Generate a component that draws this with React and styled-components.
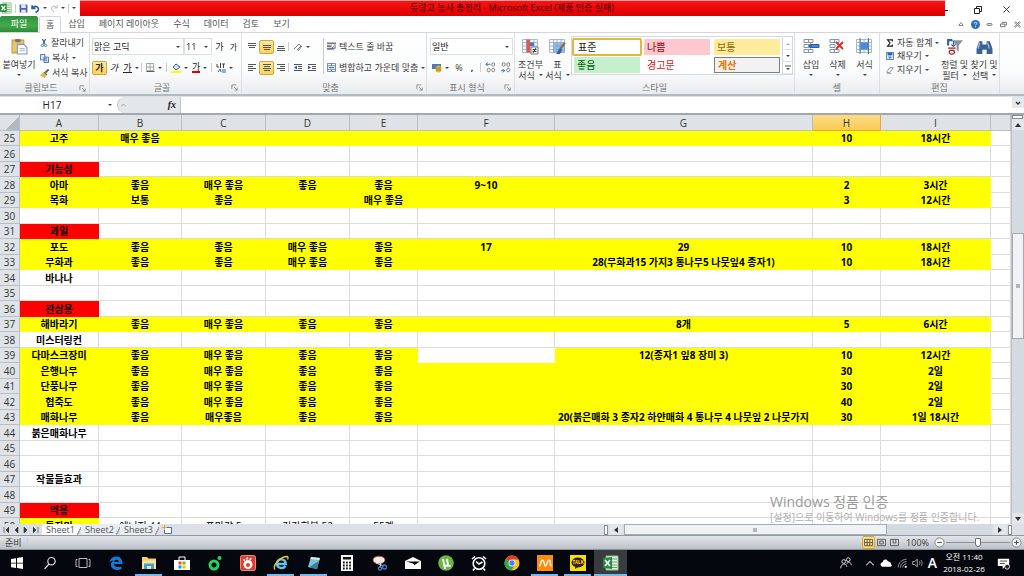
import React from "react";
import styled, {createGlobalStyle, css} from "styled-components";

const GlobalStyle = createGlobalStyle`
    * { box-sizing: border-box; }
    body {
        margin: 0;
        background: #fff;
        color: #3b3b3b;
        font: 9px/12px "Open Sans", "Noto Sans CJK KR", sans-serif;
    }
    button, input, select {
        font: inherit;
        color: inherit;
        margin: 0;
        padding: 0;
        border: 0;
        background: none;
        border-radius: 0;
        white-space: nowrap;
    }
`;

const Window = styled.div`
    display: flex;
    flex-direction: column;
    height: 100vh;
    overflow: hidden;
`;

const Svg = styled.svg`
    display: block;
    flex: none;
`;

const Icon = ({w = 16, h, box = 16, children}) => (
    <Svg width={w} height={h || w} viewBox={`0 0 ${box} ${box}`} fill="none" aria-hidden="true">
        {children}
    </Svg>
);

const Caret = styled.span`
    flex: none;
    border: 2px solid transparent;
    border-top-color: #444;
    border-bottom: 0;
`;

/* ---------- title bar ---------- */

const TitleBar = styled.header`
    display: flex;
    height: 16px;
    flex: none;
`;

const QuickBar = styled.div`
    display: flex;
    align-items: center;
    gap: 3px;
    width: 80px;
    padding: 0;
`;

const Title = styled.div`
    flex: 1;
    padding-right: 1px;
    text-align: center;
    line-height: 14px;
    color: #4d0000;
    border-top: 1px solid #ff9c9c;
    background: linear-gradient(#f91414, #d90000);
`;

const WindowButtons = styled.div`
    display: flex;
    justify-content: space-between;
    align-items: center;
    width: 79px;
    padding: 3px 14px 0 0;
`;

const IconButton = styled.button`
    display: flex;
    align-items: center;
    justify-content: center;
    flex: none;
    gap: 3px;
    height: 14px;
    ${props => props.$w && css`width: ${props.$w}px;`}
    ${props => props.$on && css`
        border: 1px solid #d6a43b;
        border-radius: 2px;
        background: linear-gradient(#fde79a, #fbd35a);
    `}
`;

const Divider = styled.span`
    flex: none;
    width: 1px;
    height: ${props => props.$tall ? 36 : 9}px;
    background: #c9ccd1;
`;

/* ---------- ribbon tabs ---------- */

const TabRow = styled.nav`
    display: flex;
    flex: none;
    height: 17px;
    border-bottom: 1px solid #d3d7dc;
`;

const RibbonTab = styled.button`
    padding: 0 7px;
    color: #555;
    ${props => props.$file && css`
        width: 38px;
        margin-right: 1px;
        color: #fff;
        border-radius: 2px 2px 0 0;
        background: linear-gradient(#2d9140, #45a94b 60%, #2c8a35);
    `}
    ${props => props.$active && css`
        height: 17px;
        padding: 0 6px;
        background: #fff;
        border: 1px solid #d3d7dc;
        border-bottom: 0;
        border-radius: 2px 2px 0 0;
    `}
`;

const TabTools = styled.div`
    display: flex;
    justify-content: flex-end;
    align-items: center;
    gap: 4px;
    flex: 1;
    padding-right: 2px;
`;

/* ---------- ribbon ---------- */

const Ribbon = styled.section`
    display: flex;
    flex: none;
    height: 63px;
    background: linear-gradient(#fff, #fbfcfc 60%, #e9ecef);
    border-bottom: 2px solid #b5bac1;
`;

const GroupBox = styled.div`
    display: flex;
    flex-direction: column;
    flex: none;
    width: ${props => props.$w}px;
    border-right: 1px solid #dcdfe3;
`;

const GroupBody = styled.div`
    display: flex;
    flex: 1;
    padding: 3px 0 0 ${props => props.$pad || 0}px;
`;

const GroupLabel = styled.div`
    display: flex;
    align-items: center;
    height: 13px;
    padding: 0 3px;
    color: #777;
    span { flex: 1; text-align: center; }
`;

const Launcher = () => (
    <Icon w={7} box={8}>
        <path d="M1 6V1h5M3.500 3.500L7 7M7 4v3H4" stroke="#888"/>
    </Icon>
);

const Group = ({w, pad, label, launcher, children}) => (
    <GroupBox $w={w}>
        <GroupBody $pad={pad}>{children}</GroupBody>
        <GroupLabel><span>{label}</span>{launcher && <Launcher/>}</GroupLabel>
    </GroupBox>
);

const BigButton = styled.button`
    display: flex;
    flex-direction: column;
    align-items: center;
    flex: none;
    width: ${props => props.$w}px;
    height: 46px;
    padding-top: 2px;
    line-height: 11px;
    svg { margin-bottom: 4px; }
    ${Caret} { margin-top: 4px; }
`;

const CaretLine = styled.span`
    display: flex;
    gap: 4px;
`;

const Stack = styled.div`
    display: flex;
    flex-direction: column;
    gap: ${props => props.$gap || 0}px;
    ${props => props.$pad && css`padding-left: ${props.$pad}px;`}
`;

/* two rows of tools that sit a little lower than the big buttons */
const ToolStack = styled(Stack)`
    gap: 4px;
    padding-top: 2px;
`;

const SmallButton = styled.button`
    display: flex;
    align-items: center;
    gap: 3px;
    height: ${props => props.$h || 14}px;
`;

const Tools = styled.div`
    display: flex;
    align-items: center;
    height: 17px;
    gap: ${props => props.$gap || 0}px;
`;

const SelectWrap = styled.label`
    display: flex;
    align-items: center;
    flex: none;
    width: ${props => props.$w}px;
    height: 17px;
    padding-right: 3px;
    background: #fff;
    border: 1px solid #dadde1;
    select {
        appearance: none;
        flex: 1;
        min-width: 0;
        height: 15px;
        padding-left: 1px;
        color: #222;
        outline: none;
    }
`;

const Combo = ({w, label, value}) => (
    <SelectWrap $w={w}>
        <select aria-label={label}><option>{value}</option></select>
        <Caret/>
    </SelectWrap>
);

const Ga = styled.span`
    font-size: ${props => props.$size || 9}px;
    line-height: 9px;
    color: #222;
    ${props => props.$bold && css`font-weight: 700;`}
    ${props => props.$italic && css`font-style: italic;`}
    ${props => props.$line && css`border-bottom: ${props.$thick || 1}px solid ${props.$line};`}
`;

const Lines = ({rows}) => (
    <Icon w={10} box={10}>
        {rows.map(([x, y, w]) => <path key={y} d={`M${x} ${y + 0.5}h${w}`} stroke="#555"/>)}
    </Icon>
);

const top = [[1, 1, 8], [1, 3, 8], [2, 5, 6]];
const middle = [[1, 3, 8], [1, 5, 8], [2, 7, 6]];
const bottom = [[2, 4, 6], [1, 6, 8], [1, 8, 8]];
const left = [[1, 1, 8], [1, 3, 5], [1, 5, 8], [1, 7, 5]];
const center = [[1, 1, 8], [2, 3, 6], [1, 5, 8], [2, 7, 6]];
const right = [[1, 1, 8], [4, 3, 5], [1, 5, 8], [4, 7, 5]];

const Indent = ({flip}) => (
    <Icon w={10} box={10}>
        <path d="M1 1.500h8M5 3.500h4M5 5.500h4M1 7.500h8" stroke="#555"/>
        <path d={flip ? "M1 2.500v4l3-2z" : "M4 2.500v4l-3-2z"} fill="#2b62ad"/>
    </Icon>
);

const GridArt = ({children}) => (
    <Icon w={17} box={17}>
        <path d="M.5 1.500h15v13H.5zM.5 4.500h15M.5 8h15M.5 11.500h15M4.500 1.500v13M8 1.500v13M12 1.500v13" fill="#f5f9fd" stroke="#8fabc9" strokeWidth=".8"/>
        {children}
    </Icon>
);

const CellsArt = ({children}) => (
    <Icon w={17} box={17}>
        <path d="M1 1.500h9v3H1zM1 11.500h9v3H1zM5.500 1.500v3M5.500 11.500v3M1 6.500h5v3H1z" fill="#f8fafc" stroke="#8795a6"/>
        {children}
    </Icon>
);

const Decimals = ({flip}) => (
    <Icon w={11} box={12}>
        <path d={flip ? "M6 2.500H1M3 .5l-2 2 2 2" : "M1 9.500h4M3 7.500l2 2-2 2"} stroke="#2b62ad"/>
        <path
            d={flip
                ? "M7.500 2c0-1.500 3-1.500 3 0v1.500c0 1.500-3 1.500-3 0zM2.500 8c0-1.500 3-1.500 3 0v1.500c0 1.500-3 1.500-3 0zM7.500 8c0-1.500 3-1.500 3 0v1.500c0 1.500-3 1.500-3 0z"
                : "M2.500 2c0-1.500 3-1.500 3 0v1.500c0 1.500-3 1.500-3 0zM7.500 2c0-1.500 3-1.500 3 0v1.500c0 1.500-3 1.500-3 0zM7.500 8c0-1.500 3-1.500 3 0v1.500c0 1.500-3 1.500-3 0z"}
            stroke="#555"
            strokeWidth=".8"
        />
    </Icon>
);

const Gallery = styled.div`
    display: grid;
    grid-template-columns: repeat(3, 70px) 10px;
    grid-template-rows: 18px 18px;
    height: 39px;
    padding-top: 1px;
    border: 1px solid #d5d8dc;
    background: #fff;
`;

const StyleCell = styled.button`
    margin: 1px 2px;
    padding-left: 3px;
    text-align: left;
    font-size: 10px;
    line-height: 12px;
    color: ${props => props.$color};
    background: ${props => props.$bg || "#fff"};
    ${props => props.$selected && css`
        margin: 0;
        padding-left: 4px;
        border: 2px solid #e3b73e;
        border-radius: 2px;
    `}
    ${props => props.$boxed && css`
        border: 1px solid #7f7f7f;
        font-weight: 700;
    `}
`;

const GalleryArrows = styled.div`
    grid-column: 4;
    grid-row: 1 / 3;
    display: grid;
    grid-template-rows: repeat(3, 1fr);
    border-left: 1px solid #d5d8dc;
    button {
        display: flex;
        align-items: center;
        justify-content: center;
        border-bottom: 1px solid #e0e2e5;
    }
`;

const styleCells = [
    {name: "표준", $color: "#222", $selected: true},
    {name: "나쁨", $color: "#9c0006", $bg: "#ffc7ce"},
    {name: "보통", $color: "#9c6500", $bg: "#ffeb9c"},
    {name: "좋음", $color: "#006100", $bg: "#c6efce"},
    {name: "경고문", $color: "#d11919"},
    {name: "계산", $color: "#e87500", $bg: "#f2f2f2", $boxed: true},
];

/* ---------- formula bar ---------- */

const FormulaBar = styled.div`
    display: flex;
    flex: none;
    height: 19px;
    background: #fff;
    border-top: 1px solid #dfe3e8;
    border-bottom: 2px solid #a2a8b0;
`;

const NameBox = styled.input`
    width: 104px;
    text-align: center;
    font-size: 10px;
    color: #222;
    outline: none;
`;

const FxArea = styled.div`
    display: flex;
    align-items: center;
    justify-content: space-between;
    width: 64px;
    margin-left: 1px;
    padding: 0 4px 0 3px;
    background: #e3e6ea;
    border: 1px solid #c2c7cd;
    border-width: 0 1px;
    border-radius: 8px 0 0 8px;
    i { font: italic 700 10px/12px "Liberation Serif", serif; color: #222; }
`;

const NameArrow = styled(IconButton)`
    width: 12px;
    height: 16px;
`;

const FormulaInput = styled.input`
    flex: 1;
    min-width: 0;
    outline: none;
`;

/* ---------- sheet ---------- */

const SheetArea = styled.main`
    display: flex;
    flex: 1;
    min-height: 0;
`;

const SheetView = styled.div`
    position: relative;
    flex: 1;
    min-width: 0;
    overflow: hidden;
`;

const Table = styled.table`
    width: 100%;
    table-layout: fixed;
    border-spacing: 0;
    font-size: 10px;
    line-height: 14px;
    color: #000;
    thead tr { height: 16px; }
    tbody tr { height: 15px; }
    tbody tr:nth-child(even) { height: 16px; }
`;

const Head = styled.th`
    padding: 0;
    font-weight: 400;
    color: #333;
    background: ${props => props.$active ? "linear-gradient(#fbdc85, #fbcb54)" : "#dfe3e8"};
    border: 1px solid ${props => props.$active ? "#e0a93a" : "#b9bfc7"};
    border-width: 0 1px 1px 0;
`;

const Corner = styled(Head)`
    background: linear-gradient(135deg, #dfe3e8 60%, #b3b9c1 60%);
`;

const fills = {red: "#ff0000", yellow: "#ffff00"};

const Cell = styled.td`
    padding: 0;
    text-align: center;
    white-space: nowrap;
    font-weight: ${props => props.$plain ? 400 : 700};
    border: 0 solid #dcdcdc;
    border-width: 0 1px 1px 0;
    ${props => props.$fill && css`
        background: ${fills[props.$fill]};
        border-color: ${fills[props.$fill]};
    `}
    ${props => props.$blank && css`border-color: #fff;`}
`;

const columns = [79, 83, 84, 84, 68, 137, 258, 68, 110];
const letters = "ABCDEFGHI".split("");
const good = "좋음";
const great = "매우 좋음";

const rows = [
    {n: 25, fill: "yellow", v: ["고주", great, "", "", "", "", "", "10", "18시간"]},
    {n: 26},
    {n: 27, title: "기능성"},
    {n: 28, fill: "yellow", v: ["아마", good, great, good, good, "9~10", "", "2", "3시간"]},
    {n: 29, fill: "yellow", v: ["목화", "보통", good, "", great, "", "", "3", "12시간"]},
    {n: 30},
    {n: 31, title: "과일"},
    {n: 32, fill: "yellow", v: ["포도", good, good, great, good, "17", "29", "10", "18시간"]},
    {n: 33, fill: "yellow", v: ["무화과", good, good, great, good, "", "28(무화과15 가지3 통나무5 나뭇잎4 종자1)", "10", "18시간"]},
    {n: 34, v: ["바나나"]},
    {n: 35},
    {n: 36, title: "관상용"},
    {n: 37, fill: "yellow", v: ["해바라기", good, great, good, good, "", "8개", "5", "6시간"]},
    {n: 38, v: ["미스터링컨"]},
    {n: 39, fill: "yellow", blank: 5, v: ["다마스크장미", good, great, good, good, "", "12(종자1 잎8 장미 3)", "10", "12시간"]},
    {n: 40, fill: "yellow", v: ["은행나무", good, great, good, good, "", "", "30", "2일"]},
    {n: 41, fill: "yellow", v: ["단풍나무", good, great, good, good, "", "", "30", "2일"]},
    {n: 42, fill: "yellow", v: ["협죽도", good, great, good, good, "", "", "40", "2일"]},
    {n: 43, fill: "yellow", v: ["매화나무", good, "매우좋음", good, good, "", "20(붉은매화 3 종자2 하얀매화 4 통나무 4 나뭇잎 2 나뭇가지", "30", "1일 18시간"]},
    {n: 44, v: ["붉은매화나무"]},
    {n: 45},
    {n: 46},
    {n: 47, v: ["작물들효과"]},
    {n: 48},
    {n: 49, title: "약용"},
    {n: 50, first: "yellow", plain: true, v: ["들장미", "에너지 44", "포만감 5", "건강회복 52", "55렙"]},
];

const SheetRow = ({row}) => (
    <tr>
        <Head scope="row">{row.n}</Head>
        {letters.map((letter, i) => {
            const blank = row.blank === i;
            const fill = i === 0 ? (row.title ? "red" : row.first || row.fill) : row.fill;
            return (
                <Cell key={letter} $fill={blank ? undefined : fill} $blank={blank} $plain={row.plain && i > 0}>
                    {i === 0 && row.title ? row.title : (row.v || [])[i]}
                </Cell>
            );
        })}
        <Cell/>
    </tr>
);

const Watermark = styled.div`
    position: absolute;
    right: 27px;
    bottom: 0;
    width: 214px;
    font-size: 10px;
    line-height: 14px;
    color: #b0b0b0;
    white-space: nowrap;
    strong {
        display: block;
        font-size: 14px;
        line-height: 16px;
        font-weight: 400;
        color: #9a9a9a;
    }
`;

const ScrollColumn = styled.div`
    display: flex;
    flex-direction: column;
    width: 13px;
    background: #d5dae1;
    border-left: 1px solid #b9bfc7;
`;

const ScrollEnd = styled.button`
    display: flex;
    align-items: center;
    justify-content: center;
    flex: none;
    width: 12px;
    height: 11px;
    background: #e3e7ec;
`;

const SplitBox = styled.span`
    flex: none;
    width: ${props => props.$wide ? 11 : 4}px;
    height: ${props => props.$wide ? 4 : 10}px;
    background: #fff;
    border: 1px solid #868d96;
`;

const Track = styled.div`
    display: flex;
    flex: 1;
    flex-direction: ${props => props.$row ? "row" : "column"};
`;

const Gap = styled.span`
    flex: ${props => props.$grow};
`;

const Thumb = styled.div`
    display: flex;
    align-items: center;
    justify-content: center;
    flex: ${props => props.$grow};
    background: #f0f2f5;
    border: 1px solid #a3abb5;
`;

const Grip = styled.span`
    width: 4px;
    height: 4px;
    background: #b1b6bc;
`;

const BottomRow = styled.div`
    display: flex;
    align-items: center;
    flex: none;
    height: 12px;
    background: #dce0e6;
    border-bottom: 1px solid #9299a2;
`;

const SheetNav = styled.div`
    display: flex;
    justify-content: space-between;
    width: 42px;
    padding: 0 3px;
`;

const SheetTab = styled.button`
    flex: none;
    width: 39px;
    height: 11px;
    padding-left: 4px;
    text-align: left;
    line-height: 11px;
    color: #555;
    background: ${props => props.$active
        ? "linear-gradient(116deg, #fff 90%, #9aa1aa 90%, #9aa1aa 93%, #dce0e6 93%)"
        : "linear-gradient(116deg, #e9ecf0 90%, #9aa1aa 90%, #9aa1aa 93%, #dce0e6 93%)"};
`;

const Spacer = styled.span`
    flex: 1;
`;

const HorizontalScroll = styled.div`
    display: flex;
    align-items: center;
    flex: none;
    width: 41%;
    height: 11px;
    gap: 2px;
    padding-right: 12px;
    ${Track} { height: 11px; background: #d5dae1; }
`;

/* ---------- status bar ---------- */

const StatusBar = styled.footer`
    display: flex;
    align-items: center;
    flex: none;
    height: 14px;
    padding: 0 2px 0 5px;
    gap: 5px;
    background: linear-gradient(#e2e5e9, #bcc1c8);
    border-bottom: 1px solid #8b9199;
`;

const ViewButtons = styled.div`
    display: flex;
    button { width: 13px; height: 13px; }
`;

const ZoomControl = styled.div`
    display: flex;
    align-items: center;
    gap: 1px;
`;

const ZoomSlider = styled.input`
    appearance: none;
    width: 64px;
    height: 12px;
    background: linear-gradient(#8b9199, #8b9199) center / 100% 1px no-repeat;
    &::-webkit-slider-thumb {
        appearance: none;
        width: 6px;
        height: 9px;
        background: #fff;
        border: 1px solid #6a7079;
        border-radius: 1px 1px 3px 3px;
    }
`;

const RoundButton = ({plus}) => (
    <Icon w={11} box={12}>
        <circle cx="6" cy="6" r="5" fill="#f2f3f5" stroke="#7c828a"/>
        <path d={plus ? "M3.500 6h5M6 3.500v5" : "M3.500 6h5"} stroke="#444"/>
    </Icon>
);

/* ---------- taskbar ---------- */

const Taskbar = styled.footer`
    display: flex;
    flex: none;
    height: 26px;
    color: #fff;
    background: #04070d;
`;

const TaskButton = styled.button`
    display: flex;
    align-items: center;
    justify-content: center;
    flex: none;
    width: 33px;
    padding: 0 3px;
    ${props => props.$active && css`background: #383b40;`}
    ${props => props.$open && css`
        background-image: linear-gradient(#76b9ed, #76b9ed);
        background-size: ${props.$active ? "100%" : "27px"} 2px;
        background-position: center bottom;
        background-repeat: no-repeat;
    `}
`;

const Tray = styled.div`
    display: flex;
    align-items: center;
    gap: 4px;
    padding-right: 14px;
`;

const People = styled.span`
    margin-right: 8px;
`;

const TrayLetter = styled.span`
    font-size: 14px;
    line-height: 16px;
    font-weight: 600;
`;

const Clock = styled.time`
    width: 46px;
    margin-right: 6px;
    padding-bottom: 1px;
    text-align: center;
    font-size: 8px;
    line-height: 12px;
    white-space: nowrap;
`;

const ExcelArt = () => (
    <>
        <path d="M3 1h12v14H3z" fill="#e8f3e6" stroke="#8bbf86"/>
        <path d="M9 4h5M9 7h5M9 10h5M9 12.500h5" stroke="#61a95c"/>
        <path d="M0 3l9-1v12l-9-1z" fill="#27893b"/>
        <path d="M2 5l5 6M7 5l-5 6" stroke="#fff" strokeWidth="1.600"/>
    </>
);

const tasks = [
    {name: "시작", art: <path d="M2 4l5-.8v4.500H2zM8 3l6-1v5.700H8zM2 8.500h5V13l-5-.8zM8 8.500h6V14l-6-1z" fill="#fff"/>},
    {name: "검색", art: <path d="M9.500 2.500a3.700 3.700 0 1 1 0 7.400 3.700 3.700 0 0 1 0-7.400zM7 9l-4.500 5" stroke="#ddd" strokeWidth="1.200"/>},
    {name: "작업 보기", art: <path d="M4 3.500h8v9H4zM2.500 4.500h-1.500v7h1.500M13.500 4.500H15v7h-1.500" stroke="#bbb"/>},
    {name: "Edge", art: (
        <path d="M1.500 7.500C2 3.500 5 1.500 8.500 1.500c4 0 6 3 6 7.500H6c0 3 4.500 4 7.500 2.200V14C8 16.500 2.500 14 2.800 9.500 3 7.500 4.500 6 6 5.500 3.500 5.300 2 6.500 1.500 7.500zM6.200 7h4.500c0-3-4.200-3-4.500 0z" fill="#1678d4"/>
    )},
    {name: "파일 탐색기", open: true, art: (
        <>
            <path d="M1 2h5l1.500 1.500H15V14H1z" fill="#f3cf6b"/>
            <path d="M1 5.500h14V14H1z" fill="#fbe39a"/>
            <path d="M3 14V8.500h10V14h-3v-3H6v3z" fill="#3fa1dc"/>
        </>
    )},
    {name: "스토어", art: (
        <>
            <path d="M0 5h16v10H0z" fill="#fff"/>
            <path d="M5 5V2h6v3" stroke="#fff"/>
            <path d="M4.500 6.500h3v3h-3z" fill="#f25022"/>
            <path d="M8.500 6.500h3v3h-3z" fill="#7fba00"/>
            <path d="M4.500 10.500h3v3h-3z" fill="#00a4ef"/>
            <path d="M8.500 10.500h3v3h-3z" fill="#ffb900"/>
        </>
    )},
    {name: "네이버", art: (
        <>
            <circle cx="7" cy="10" r="4" stroke="#22d35b" strokeWidth="3"/>
            <circle cx="12.500" cy="3" r="2" fill="#22d35b"/>
        </>
    )},
    {name: "녹화", art: (
        <>
            <rect x=".5" y=".5" width="15" height="15" rx="2" fill="#e23a2c" stroke="#f08a80"/>
            <circle cx="8" cy="9.500" r="4.500" fill="#fff"/>
            <circle cx="8" cy="10" r="2" fill="#e23a2c"/>
            <path d="M3.500 4.500l1.500 1M7 2.500l.5 2M11 3l-1 2" stroke="#fff" strokeWidth="1.800"/>
        </>
    )},
    {name: "Internet Explorer", open: true, art: (
        <>
            <path d="M12.500 11C10 14.500 4 13.500 4 8.500 4 3 12.500 2.800 12.800 9H5" stroke="#5cc5f2" strokeWidth="2.400"/>
            <path d="M2 14.500C-1 11 7 1.500 14.500 1.500c1 1 .5 2 0 3" stroke="#f2c230" strokeWidth="1.300"/>
        </>
    )},
    {name: "메모장", open: true, art: (
        <>
            <path d="M5 2l9 1-3 11-9-2z" fill="#7cc3d6"/>
            <path d="M5 2l9 1-.6 2-9-1z" fill="#dce9ec"/>
            <path d="M8 9l5-3-2 8-8-1.500z" fill="#3d7f98"/>
        </>
    )},
    {name: "계산기", art: (
        <>
            <path d="M2 0h12v16H2z" fill="#fff"/>
            <path d="M4 2h8v2.500H4z" fill="#111"/>
            <path d="M4 7.500h8M4 10.500h8M4 13.500h8" stroke="#111" strokeWidth="1.800" strokeDasharray="1.700 1.400"/>
        </>
    )},
    {name: "캡처 도구", art: (
        <>
            <ellipse cx="7" cy="5" rx="6" ry="3.800" fill="#eee" stroke="#cf3f33"/>
            <path d="M4 8l8 3M9 5l-1 8" stroke="#ddd"/>
            <circle cx="12.500" cy="12" r="2" stroke="#2f83c9" strokeWidth="1.300"/>
            <circle cx="8" cy="13.500" r="1.700" stroke="#2f83c9" strokeWidth="1.300"/>
        </>
    )},
    {name: "메일", art: (
        <>
            <path d="M0 6l8-4 8 4v8H0z" fill="#fff"/>
            <path d="M1 6.500h14L9.500 10 8 8.500z" fill="#05080d"/>
        </>
    )},
    {name: "uTorrent", art: (
        <>
            <circle cx="8" cy="8" r="7.800" fill="#6cb644"/>
            <path d="M5 4l1.200 5.500c.6 2.500 4 1.800 3.600-.6L9 4M6 9l1 5M9.800 9c.3 2 1.500 2.200 2.700 1.500" stroke="#fff" strokeWidth="1.900"/>
        </>
    )},
    {name: "알람", art: (
        <>
            <circle cx="8" cy="8.500" r="5.800" stroke="#fff" strokeWidth="1.600"/>
            <path d="M5 6.500l3 2.500 3.500-2M1 4l3-2.500M15 4l-3-2.500M3.500 13.500L2 15.500M12.500 13.500l1.500 2" stroke="#fff" strokeWidth="1.600"/>
        </>
    )},
    {name: "Chrome", art: (
        <>
            <circle cx="8" cy="8" r="7.500" fill="#fbc116"/>
            <path d="M8 8L1.500 4.200A7.500 7.500 0 0 1 14.700 4.500H8z" fill="#e33b2e"/>
            <path d="M8 8L1.500 4.200A7.500 7.500 0 0 0 7.500 15.500L11 9.500z" fill="#2da94f"/>
            <circle cx="8" cy="8" r="3.500" fill="#fff"/>
            <circle cx="8" cy="8" r="2.700" fill="#4285f4"/>
        </>
    )},
    {name: "모비즌", open: true, art: (
        <>
            <path d="M0 0h16v16H0z" fill="#ff8a0c"/>
            <path d="M2 11c2 0 1.500-6 3.500-6S7 11 8.500 11 10 5 12 5s.5 6 2.500 6" stroke="#fff" strokeWidth="1.400"/>
        </>
    )},
    {name: "카카오톡", open: true, art: (
        <>
            <path d="M0 0h16v16H0z" fill="#fae100"/>
            <ellipse cx="8" cy="7.500" rx="6.500" ry="5" fill="#3a1d1d"/>
            <path d="M5 11v3l3-2z" fill="#3a1d1d"/>
            <text x="8" y="9.200" fontSize="4.500" fontWeight="700" textAnchor="middle" fill="#fae100">TALK</text>
        </>
    )},
    {name: "Excel", open: true, active: true, art: <ExcelArt/>},
];

const App = () => (
    <Window>
        <GlobalStyle/>
        <TitleBar>
            <QuickBar>
                <Icon w={12}><ExcelArt/></Icon>
                <Divider/>
                <IconButton aria-label="저장">
                    <Icon w={9}>
                        <path d="M1 1h14v14H1z" fill="#4a5fb5"/>
                        <path d="M4 1h8v6H4zM4 10h8v5H4z" fill="#e9edf8"/>
                    </Icon>
                </IconButton>
                <IconButton aria-label="실행 취소">
                    <Icon w={9}><path d="M3 7c5-5 11-2 10 3-.5 2-2 4-5 5M2 2v6h6" stroke="#2759b0" strokeWidth="3"/></Icon>
                    <Caret/>
                </IconButton>
                <IconButton aria-label="다시 실행">
                    <Icon w={8}><path d="M13 7C8 2 2 5 3 10c.5 2 2 4 5 5M14 2v6H8" stroke="#b3b3b3" strokeWidth="2"/></Icon>
                    <Caret/>
                </IconButton>
                <Divider/>
                <Caret/>
            </QuickBar>
            <Title>듀랑고 농사 총정리 - Microsoft Excel (제품 인증 실패)</Title>
            <WindowButtons>
                <IconButton aria-label="최소화"><Icon w={8} box={8}><path d="M0 4.500h3" stroke="#222"/></Icon></IconButton>
                <IconButton aria-label="이전 크기로"><Icon w={8} box={8}><path d="M.5 2.500h5v5h-5zM2.500 2V.5h5v5H6" stroke="#222"/></Icon></IconButton>
                <IconButton aria-label="닫기"><Icon w={7} box={8}><path d="M.5.500l7 7M7.500.5l-7 7" stroke="#222"/></Icon></IconButton>
            </WindowButtons>
        </TitleBar>

        <TabRow>
            <RibbonTab $file>파일</RibbonTab>
            <RibbonTab $active>홈</RibbonTab>
            {["삽입", "페이지 레이아웃", "수식", "데이터", "검토", "보기"].map(tab => <RibbonTab key={tab}>{tab}</RibbonTab>)}
            <TabTools>
                <IconButton $w={10} aria-label="리본 최소화"><Icon w={6} box={8}><path d="M1 6h6L4 2z" stroke="#666"/></Icon></IconButton>
                <IconButton $w={10} aria-label="도움말">
                    <Icon w={9} box={10}>
                        <circle cx="5" cy="5" r="5" fill="#2b6fc0"/>
                        <path d="M3.500 4c0-2 3-2 3 0 0 1-1.500 1-1.500 2M5 7v1" stroke="#fff"/>
                    </Icon>
                </IconButton>
                <IconButton $w={10} aria-label="창 최소화"><Icon w={7} box={8}><rect x="1" y="3" width="6" height="2" rx="1" stroke="#666"/></Icon></IconButton>
                <IconButton $w={10} aria-label="창 복원"><Icon w={7} box={8}><path d="M.5 3.500h5v3h-5zM2.500 3V1.500h5v3H6" stroke="#666"/></Icon></IconButton>
                <IconButton $w={10} aria-label="창 닫기"><Icon w={7} box={8}><path d="M1 1l6 6M7 1L1 7" stroke="#777" strokeWidth="2"/><path d="M1 1l6 6M7 1L1 7" stroke="#fff" strokeWidth=".7"/></Icon></IconButton>
            </TabTools>
        </TabRow>

        <Ribbon>
            <Group w={90} label="클립보드" launcher>
                <BigButton $w={38}>
                    <Icon w={17}>
                        <path d="M1 2h11v12H1z" fill="#efc368" stroke="#c99a3c"/>
                        <path d="M4 1h5v3H4z" fill="#6e7480"/>
                        <path d="M6 6h6l3 3v6H6z" fill="#fff" stroke="#8397b3"/>
                        <path d="M8 10h5M8 12h5" stroke="#a9b8cc"/>
                    </Icon>
                    붙여넣기
                    <Caret/>
                </BigButton>
                <Stack $gap={1} $pad={2}>
                    <SmallButton>
                        <Icon w={8} box={10}><path d="M3 0l3 6M7 0L4 6" stroke="#334b73" strokeWidth="1.300"/><circle cx="3" cy="8" r="1.500" stroke="#2b62ad"/><circle cx="7" cy="8" r="1.500" stroke="#2b62ad"/></Icon>
                        잘라내기
                    </SmallButton>
                    <SmallButton>
                        <Icon w={9} box={10}><path d="M.5.500h5v6h-5zM4.500 3.500h5v6h-5z" fill="#dce8f7" stroke="#3c6cae"/><path d="M6 5.500h2M6 7.500h2" stroke="#3c6cae"/></Icon>
                        복사<Caret/>
                    </SmallButton>
                    <SmallButton>
                        <Icon w={9} box={10}><path d="M9.500.5L6 4" stroke="#555" strokeWidth="2"/><path d="M5 3l3 3-3 4-5-3z" fill="#e6b83b"/><path d="M5 3l3 3-1 1-3-3z" fill="#5b6d8c"/></Icon>
                        서식 복사
                    </SmallButton>
                </Stack>
            </Group>

            <Group w={152} pad={2} label="글꼴" launcher>
                <ToolStack>
                    <Tools>
                        <Combo w={92} label="글꼴" value="맑은 고딕"/>
                        <Combo w={28} label="글꼴 크기" value="11"/>
                        <IconButton $w={15} aria-label="글꼴 크게"><Ga>가</Ga></IconButton>
                        <IconButton $w={13} aria-label="글꼴 작게"><Ga $size={8}>가</Ga></IconButton>
                    </Tools>
                    <Tools>
                        <IconButton $w={15} $on aria-label="굵게"><Ga $bold>가</Ga></IconButton>
                        <IconButton $w={14} aria-label="기울임꼴"><Ga $italic>가</Ga></IconButton>
                        <IconButton $w={20} aria-label="밑줄"><Ga $line="#222">가</Ga><Caret/></IconButton>
                        <Tools $gap={4}>
                            <Divider/>
                            <IconButton aria-label="테두리">
                                <Icon w={9} box={10}><path d="M.5.500h8v8h-8zM4.500.5v8M.5 4.500h8" stroke="#999"/><path d="M.5 9.500h9" stroke="#444"/></Icon>
                                <Caret/>
                            </IconButton>
                            <Divider/>
                            <IconButton aria-label="채우기 색">
                                <Icon w={10} box={10}><path d="M2 4l3-3 4 3-4 3z" fill="#d5e3f5" stroke="#3b5f95"/><path d="M0 8h10v2H0z" fill="#ff0"/></Icon>
                                <Caret/>
                            </IconButton>
                            <IconButton aria-label="글꼴 색"><Ga $line="#e00000" $thick={2}>가</Ga><Caret/></IconButton>
                            <Divider/>
                            <IconButton aria-label="윗주">
                                <Icon w={10} box={10}><path d="M1 1v3h2M4.500 0v5M6 1h3M7.500 1v4" stroke="#444"/><path d="M2 9l2-3 1 3M7 6v4M9 6v4" stroke="#2b62ad"/></Icon>
                                <Caret/>
                            </IconButton>
                        </Tools>
                    </Tools>
                </ToolStack>
            </Group>

            <Group w={185} pad={3} label="맞춤" launcher>
                <ToolStack>
                    <Tools>
                        <IconButton $w={14} aria-label="위쪽 맞춤"><Lines rows={top}/></IconButton>
                        <IconButton $w={15} $on aria-label="가운데 맞춤"><Lines rows={middle}/></IconButton>
                        <IconButton $w={14} aria-label="아래쪽 맞춤"><Lines rows={bottom}/></IconButton>
                        <Tools $gap={4}>
                            <Divider/>
                            <IconButton aria-label="방향"><Icon w={10} box={10}><path d="M1 7l5-5 2 2-4 4M5 9l4-5" stroke="#777"/></Icon><Caret/></IconButton>
                        </Tools>
                    </Tools>
                    <Tools>
                        <IconButton $w={14} aria-label="왼쪽 맞춤"><Lines rows={left}/></IconButton>
                        <IconButton $w={15} $on aria-label="가로 가운데"><Lines rows={center}/></IconButton>
                        <IconButton $w={14} aria-label="오른쪽 맞춤"><Lines rows={right}/></IconButton>
                        <Tools $gap={4}>
                            <Divider/>
                            <IconButton aria-label="내어쓰기"><Indent/></IconButton>
                            <IconButton aria-label="들여쓰기"><Indent flip/></IconButton>
                        </Tools>
                    </Tools>
                </ToolStack>
                <ToolStack $pad={6}><Divider $tall/></ToolStack>
                <ToolStack $pad={3}>
                    <SmallButton $h={17}>
                        <Icon w={9} box={10}><path d="M0 1.500h10M0 4.500h5M0 7.500h6" stroke="#777" strokeWidth="2"/><path d="M9 3v4H6M7.500 5L5.500 7l2 2" stroke="#2b62ad"/></Icon>
                        텍스트 줄 바꿈
                    </SmallButton>
                    <SmallButton $h={17}>
                        <Icon w={9} box={10}><path d="M.5.500h9v9h-9zM.5 3h9M.5 7h9M5 .5V3M5 7v2.500" stroke="#5d7fae"/><path d="M2 5h6" stroke="#2b62ad"/></Icon>
                        병합하고 가운데 맞춤<Caret/>
                    </SmallButton>
                </ToolStack>
            </Group>

            <Group w={88} pad={3} label="표시 형식" launcher>
                <ToolStack>
                    <Combo w={83} label="표시 형식" value="일반"/>
                    <Tools $gap={4}>
                        <IconButton $w={20} aria-label="회계 표시 형식">
                            <Icon w={10} box={10}><path d="M0 1h9v5H0z" fill="#4d79b5"/><ellipse cx="6.500" cy="6" rx="3" ry="3.500" fill="#e7b83a"/><path d="M4 5h5M4 7h5" stroke="#7a5a12" strokeWidth=".6"/></Icon>
                            <Caret/>
                        </IconButton>
                        <IconButton $w={10} aria-label="백분율">%</IconButton>
                        <IconButton $w={8} aria-label="쉼표"><Ga $bold>,</Ga></IconButton>
                        <Divider/>
                        <IconButton aria-label="자릿수 늘림"><Decimals flip/></IconButton>
                        <IconButton aria-label="자릿수 줄임"><Decimals/></IconButton>
                    </Tools>
                </ToolStack>
            </Group>

            <Group w={280} pad={2} label="스타일">
                <BigButton $w={27}>
                    <GridArt>
                        <path d="M4.500 1.500H8v13H4.500z" fill="#e05a4c"/>
                        <path d="M8 4.500h4v3.500H8z" fill="#4077c4"/>
                        <path d="M9 9h7v7H9z" fill="#fff" stroke="#777"/>
                        <path d="M10.500 11.500h4M10.500 13.500h4M14 10l-3 5" stroke="#444"/>
                    </GridArt>
                    조건부
                    <CaretLine>서식<Caret/></CaretLine>
                </BigButton>
                <BigButton $w={27}>
                    <GridArt>
                        <path d="M4.500 4.500h11v10h-11z" fill="#6fa0dc" opacity=".7"/>
                        <path d="M16 5l-5 6" stroke="#8a6a3a" strokeWidth="2"/>
                        <path d="M11 10l2 2-2 4H7z" fill="#3c5f94"/>
                    </GridArt>
                    표
                    <CaretLine>서식<Caret/></CaretLine>
                </BigButton>
                <Gallery>
                    {styleCells.map(({name, ...look}) => <StyleCell key={name} {...look}>{name}</StyleCell>)}
                    <GalleryArrows>
                        <button aria-label="위로"><Icon w={4} box={4}><path d="M0 3h4L2 1z" fill="#aaa"/></Icon></button>
                        <button aria-label="아래로"><Caret/></button>
                        <button aria-label="자세히"><Icon w={6} box={6}><path d="M0 1h6" stroke="#555"/><path d="M1 3h4L3 5z" fill="#444"/></Icon></button>
                    </GalleryArrows>
                </Gallery>
            </Group>

            <Group w={85} pad={3} label="셀">
                <BigButton $w={26}>
                    <CellsArt><path d="M8 6.500h8v3H8z" fill="#4e86cf" stroke="#2b5fa8"/><path d="M8 5L5 8l3 3z" fill="#2b5fa8"/></CellsArt>
                    삽입<Caret/>
                </BigButton>
                <BigButton $w={27}>
                    <CellsArt><path d="M7 4l7 7M14 4l-7 7" stroke="#dc2c20" strokeWidth="1.800"/></CellsArt>
                    삭제<Caret/>
                </BigButton>
                <BigButton $w={27}>
                    <GridArt><path d="M4.500 4.500H12v7H4.500z" fill="#4c88dc"/><path d="M4 0v16M12.500 0v16" stroke="#55749c"/></GridArt>
                    서식<Caret/>
                </BigButton>
            </Group>

            <Group w={120} pad={6} label="편집">
                <Stack>
                    <SmallButton $h={13}>
                        <Icon w={8} box={10}><path d="M8 3V1H2l3 4-3 4h6V7" stroke="#222" strokeWidth="1.500"/></Icon>
                        자동 합계<Caret/>
                    </SmallButton>
                    <SmallButton>
                        <Icon w={8} box={10}><path d="M.5.500h9v9h-9z" fill="#dce8f7" stroke="#2b62ad"/><path d="M2 1h6v3H2z" fill="#2b62ad"/><path d="M5 4v4M3 6l2 2 2-2" stroke="#2b62ad"/></Icon>
                        채우기<Caret/>
                    </SmallButton>
                    <SmallButton>
                        <Icon w={8} box={10}><path d="M1 7l4-5h4L5 8H1z" fill="#fff" stroke="#6c7f9b"/><path d="M1 9.500h6" stroke="#999"/></Icon>
                        지우기<Caret/>
                    </SmallButton>
                </Stack>
                <Spacer/>
                <BigButton $w={29}>
                    <Icon w={17}>
                        <path d="M5 2h11l-4 5v6l-2-2V7z" fill="#8b929c"/>
                        <path d="M1 1h5v2H3v4H1z" fill="#2b62ad"/>
                        <path d="M7 3v5M5 6l2 2 2-2" stroke="#2b62ad"/>
                        <path d="M2 9.500h7M3 11.500h5" stroke="#a01818"/>
                        <ellipse cx="5.500" cy="13.500" rx="2.500" ry="1.700" stroke="#a01818"/>
                    </Icon>
                    정렬 및
                    <CaretLine>필터<Caret/></CaretLine>
                </BigButton>
                <BigButton $w={30}>
                    <Icon w={17}>
                        <path d="M3 3h3v3h4V3h3l2.500 7v5H10v-4H6v4H.5v-5z" fill="#3c6197"/>
                        <path d="M3.500 4.500L2 10M11 4.500l1.500 5.500" stroke="#b8cdec"/>
                    </Icon>
                    찾기 및
                    <CaretLine>선택<Caret/></CaretLine>
                </BigButton>
            </Group>
        </Ribbon>

        <FormulaBar>
            <NameBox aria-label="이름 상자" defaultValue="H17"/>
            <NameArrow aria-label="이름 목록"><Caret/></NameArrow>
            <FxArea><Icon w={5} box={6}><path d="M1 4c0-3 4-3 4 0" stroke="#999"/></Icon><i>fx</i></FxArea>
            <FormulaInput aria-label="수식 입력줄"/>
            <ScrollEnd aria-label="수식 입력줄 확장"><Icon w={6} box={6}><path d="M1 2l2 2 2-2" stroke="#333" strokeWidth="1.300"/></Icon></ScrollEnd>
        </FormulaBar>

        <SheetArea>
            <SheetView>
                <Table>
                    <colgroup>
                        <col width="20"/>
                        {columns.map((width, i) => <col key={i} width={width}/>)}
                        <col/>
                    </colgroup>
                    <thead>
                        <tr>
                            <Corner aria-label="모두 선택"/>
                            {letters.map(letter => <Head key={letter} scope="col" $active={letter === "H"}>{letter}</Head>)}
                            <Head/>
                        </tr>
                    </thead>
                    <tbody>
                        {rows.map(row => <SheetRow key={row.n} row={row}/>)}
                    </tbody>
                </Table>
                <Watermark>
                    <strong>Windows 정품 인증</strong>
                    [설정]으로 이동하여 Windows를 정품 인증합니다.
                </Watermark>
            </SheetView>
            <ScrollColumn>
                <SplitBox $wide/>
                <ScrollEnd aria-label="위로 스크롤"><Icon w={6} box={6}><path d="M0 5h6L3 1z" fill="#333"/></Icon></ScrollEnd>
                <Track>
                    <Gap $grow={103}/>
                    <Thumb $grow={105}><Grip/></Thumb>
                    <Gap $grow={174}/>
                </Track>
                <ScrollEnd aria-label="아래로 스크롤"><Icon w={6} box={6}><path d="M0 1h6L3 5z" fill="#333"/></Icon></ScrollEnd>
            </ScrollColumn>
        </SheetArea>

        <BottomRow>
            <SheetNav>
                {["M1 0v6M6 0L3 3l3 3z", "M5 0L2 3l3 3z", "M1 0l3 3-3 3z", "M5 0v6M0 0l3 3-3 3z"].map((d, i) => (
                    <button key={d} aria-label={["처음", "이전", "다음", "마지막"][i]}>
                        <Icon w={6} box={6}><path d={d} fill="#333" stroke="#333" strokeWidth=".6"/></Icon>
                    </button>
                ))}
            </SheetNav>
            <SheetTab $active>Sheet1</SheetTab>
            <SheetTab>Sheet2</SheetTab>
            <SheetTab>Sheet3</SheetTab>
            <IconButton $w={16} aria-label="워크시트 삽입">
                <Icon w={10} box={10}><path d="M2.500 2.500h7v6h-7z" fill="#fff" stroke="#4d70a8"/><path d="M0 2.500h5M2.500 0v5" stroke="#e6a425"/></Icon>
            </IconButton>
            <Spacer/>
            <HorizontalScroll>
                <SplitBox/>
                <ScrollEnd aria-label="왼쪽으로 스크롤"><Icon w={6} box={6}><path d="M5 0L1 3l4 3z" fill="#333"/></Icon></ScrollEnd>
                <Track $row>
                    <Thumb $grow={265}><Grip/></Thumb>
                    <Gap $grow={107}/>
                </Track>
                <ScrollEnd aria-label="오른쪽으로 스크롤"><Icon w={6} box={6}><path d="M1 0l4 3-4 3z" fill="#333"/></Icon></ScrollEnd>
                <SplitBox/>
            </HorizontalScroll>
        </BottomRow>

        <StatusBar>
            준비
            <Divider/>
            <Spacer/>
            <ViewButtons>
                <IconButton $on aria-label="기본"><Icon w={9} box={10}><path d="M.5 1.500h9v7h-9zM.5 5h9M3.500 1.500v7M6.500 1.500v7" stroke="#555"/></Icon></IconButton>
                <IconButton aria-label="페이지 레이아웃"><Icon w={9} box={10}><path d="M.5 1.500h9v7h-9zM3 3.500h4v3H3z" stroke="#555"/></Icon></IconButton>
                <IconButton aria-label="페이지 나누기"><Icon w={9} box={10}><path d="M.5 1.500h9v7h-9zM3.500 1.500v4M6.500 1.500v4M3.500 5.500h3" stroke="#555"/></Icon></IconButton>
            </ViewButtons>
            100%
            <ZoomControl>
                <IconButton aria-label="축소"><RoundButton/></IconButton>
                <ZoomSlider type="range" aria-label="확대/축소" defaultValue={50}/>
                <IconButton aria-label="확대"><RoundButton plus/></IconButton>
            </ZoomControl>
        </StatusBar>

        <Taskbar>
            {tasks.map(task => (
                <TaskButton key={task.name} aria-label={task.name} $open={task.open} $active={task.active}>
                    <Icon>{task.art}</Icon>
                </TaskButton>
            ))}
            <Spacer/>
            <Tray>
                <People>
                    <Icon w={12}><circle cx="5" cy="6" r="2.500" stroke="#ddd" strokeWidth="1.300"/><path d="M1 15c0-7 8-7 8-2" stroke="#ddd" strokeWidth="1.300"/><circle cx="11" cy="3.500" r="2.500" stroke="#ddd" strokeWidth="1.300"/><path d="M9 9c2-4 6-2 6 2" stroke="#ddd" strokeWidth="1.300"/></Icon>
                </People>
                <Icon w={12}><path d="M3 11l5-5 5 5" stroke="#ddd" strokeWidth="1.400"/></Icon>
                <Icon w={12}><path d="M4 13a3 3 0 0 1-.5-6C4 3 9 2 10.500 6c3-.5 4.500 2 4 3.500 2 .5 1.500 3.500-.5 3.500z" fill="#fff"/></Icon>
                <Icon w={12}><path d="M3 14C3 8 8 3 14 3M6 14c0-4.500 3.500-8 8-8M9 14c0-3 2-5 5-5" stroke="#999" strokeWidth="1.300"/><circle cx="13" cy="13" r="1.500" fill="#fff"/></Icon>
                <Icon w={12}><path d="M1 6h2.500L7 3v10l-3.500-3H1z" stroke="#ddd"/><path d="M9.500 5.500c1.500 1.500 1.500 3.500 0 5M12 4c2 2.500 2 5.500 0 8" stroke="#bbb"/></Icon>
                <TrayLetter>A</TrayLetter>
                <Clock dateTime="2018-02-26T11:40">오전 11:40<br/>2018-02-26</Clock>
                <Icon w={13}><path d="M1 2h14v9h-5l-3 4v-4H1z" fill="#fff"/><path d="M3.500 5h9M3.500 8h6" stroke="#222"/><circle cx="12.500" cy="12" r="3" fill="#222" stroke="#fff"/></Icon>
            </Tray>
        </Taskbar>
    </Window>
);

export default App;
